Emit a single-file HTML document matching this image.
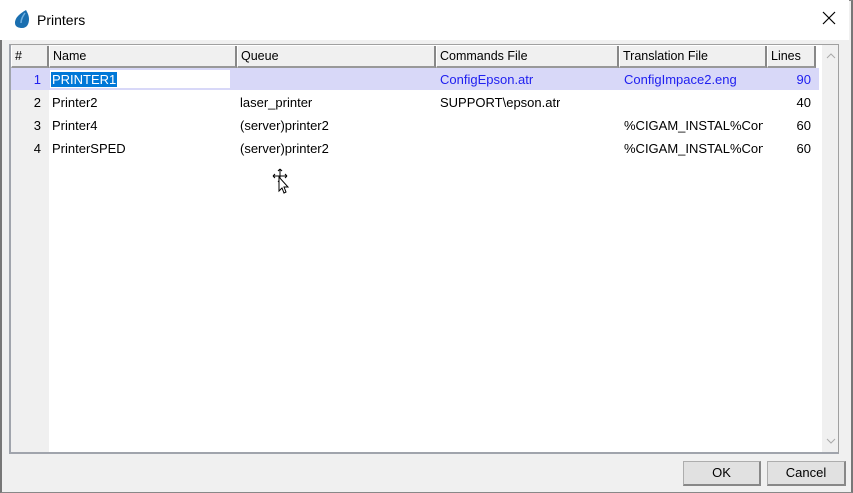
<!DOCTYPE html>
<html><head><meta charset="utf-8"><style>
*{margin:0;padding:0;box-sizing:border-box}
body{width:853px;height:493px;overflow:hidden;background:#f0f0f0;font-family:"Liberation Sans",Arial,sans-serif;font-size:13px;color:#000;position:relative}
.win{position:absolute;left:0;top:0;width:853px;height:493px;border:1px solid #888;border-left:2px solid #777;border-right:2px solid #777}
.title{position:absolute;left:0;top:0;width:849px;height:40px;background:#fff}
.title span{position:absolute;left:37px;top:12px;font-size:14px}
.x{position:absolute;left:822px;top:11px}
.grid{position:absolute;left:9px;top:44px;width:830px;height:410px;border:1px solid #a0a0a0;border-bottom:2px solid #a0a4ac;border-left:2px solid #a0a4ac;background:#fff;overflow:hidden}
.fix{position:absolute;left:0;top:0;width:38px;height:100%;background:#f0f0f0}
.hdr{position:absolute;top:1px;height:22px;background:#f0f0f0;border-right:2px solid #888;border-bottom:2px solid #999;border-left:1px solid #fff;padding:3px 0 0 3px;white-space:nowrap;overflow:hidden;font-size:12.5px}
.sel{position:absolute;left:0;top:23px;width:808px;height:22px;background:#d8d8f8}
.c{position:absolute;white-space:nowrap;overflow:hidden}
.n{text-align:right}
.blue{color:#2020f0}
.sb{position:absolute;left:811px;top:0;width:17px;height:100%;background:#f0f0f0}
.btn{position:absolute;top:461px;height:25px;background:#e1e1e1;border:1px solid #adadad;border-right:2px solid #888;border-bottom:2px solid #888;text-align:center;line-height:22px;font-size:13px}
</style></head><body>
<div class="win"></div>
<div class="title">
<svg style="position:absolute;left:13px;top:9px" width="18" height="20" viewBox="0 0 18 20"><path d="M13 1 C8 4 2 8 2 14 C2 18 6 19 9 19 C14 19 16 15 16 10 C16 6 14 3 13 1Z" fill="#1a6fb0"/><path d="M12 4 C10 7 8 10 8 14" stroke="#6fb0e0" stroke-width="1.5" fill="none"/></svg>
<span>Printers</span>
<svg class="x" width="14" height="14" viewBox="0 0 14 14"><path d="M1 1L13 13M13 1L1 13" stroke="#000" stroke-width="1.2"/></svg>
</div>
<div class="grid">
<div class="fix"></div>
<div class="sel"></div>
<div class="hdr" style="left:0;width:38px">#</div>
<div class="hdr" style="left:38px;width:188px">Name</div>
<div class="hdr" style="left:226px;width:199px">Queue</div>
<div class="hdr" style="left:425px;width:183px">Commands File</div>
<div class="hdr" style="left:608px;width:148px">Translation File</div>
<div class="hdr" style="left:756px;width:49px">Lines</div>
<div class="sb"><svg style="position:absolute;left:4px;top:8px" width="10" height="6"><path d="M1 5L5 1L9 5" stroke="#aaa" fill="none"/></svg><svg style="position:absolute;left:4px;bottom:8px" width="10" height="6"><path d="M1 1L5 5L9 1" stroke="#aaa" fill="none"/></svg></div>

<div style="position:absolute;left:39px;top:25px;width:180px;height:18px;background:#fff"></div>
<div class="c" style="left:40px;top:27px;background:#0078d7;color:#fff;padding:0 1px">PRINTER1</div>
<div class="c n blue" style="left:0;top:27px;width:30px">1</div>
<div class="c blue" style="left:429px;top:27px">ConfigEpson.atr</div>
<div class="c blue" style="left:613px;top:27px">ConfigImpace2.eng</div>
<div class="c n blue" style="left:756px;top:27px;width:44px">90</div>

<div class="c n" style="left:0;top:50px;width:30px">2</div>
<div class="c" style="left:41px;top:50px">Printer2</div>
<div class="c" style="left:229px;top:50px">laser_printer</div>
<div class="c" style="left:429px;top:50px">SUPPORT\epson.atr</div>
<div class="c n" style="left:756px;top:50px;width:44px">40</div>

<div class="c n" style="left:0;top:73px;width:30px">3</div>
<div class="c" style="left:41px;top:73px">Printer4</div>
<div class="c" style="left:229px;top:73px">(server)printer2</div>
<div class="c" style="left:613px;top:73px;width:139px">%CIGAM_INSTAL%Config</div>
<div class="c n" style="left:756px;top:73px;width:44px">60</div>

<div class="c n" style="left:0;top:96px;width:30px">4</div>
<div class="c" style="left:41px;top:96px">PrinterSPED</div>
<div class="c" style="left:229px;top:96px">(server)printer2</div>
<div class="c" style="left:613px;top:96px;width:139px">%CIGAM_INSTAL%Config</div>
<div class="c n" style="left:756px;top:96px;width:44px">60</div>
</div>
<svg style="position:absolute;left:272px;top:168px" width="20" height="26" viewBox="0 0 20 26"><path d="M8 1V15M1 8H15M8 1L6 3M8 1L10 3M1 8L3 6M1 8L3 10M15 8L13 6M15 8L13 10M8 15L6 13M8 15L10 13" stroke="#000" fill="none"/><path d="M7 9L7 23L10 20L12 25L14 24L12 19L16 19Z" fill="#fff" stroke="#000"/></svg>
<div class="btn" style="left:683px;width:78px">OK</div>
<div class="btn" style="left:767px;width:79px">Cancel</div>
</body></html>
